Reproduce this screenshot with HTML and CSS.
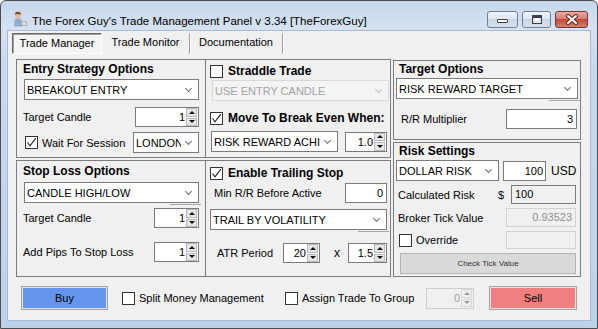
FILE: index.html
```html
<!DOCTYPE html>
<html lang="en">
<head>
    <meta charset="UTF-8">
    <title>The Forex Guy's Trade Management Panel</title>
    <link rel="stylesheet" href="styles.css">
</head>
<body>
<div class="window">
    <div class="titlebar">
        <svg class="appicon" width="14" height="16" viewBox="0 0 14 16">
            <path d="M1 15.5 L1.4 9.5 Q1.8 7.2 5 7.2 Q8.2 7.2 8.6 9.5 L9 15.5 Z" fill="#93aecd"/>
            <circle cx="5" cy="4.2" r="3" fill="#eabb92"/>
            <path d="M1.9 4 Q1.8 0.6 5.2 0.8 Q8.3 1 8 4 L7.2 2.9 Q5 3.4 2.8 2.9 Z" fill="#7b4a28"/>
            <rect x="8.5" y="10.5" width="5" height="4" fill="#dedede" stroke="#9a9a9a" stroke-width="0.7"/>
        </svg>
        <span class="title">The Forex Guy's Trade Management Panel v 3.34 [TheForexGuy]</span>
        <div class="controls">
            <span class="wbtn min"><i></i></span>
            <span class="wbtn max"><i></i></span>
            <span class="wbtn close">
                <svg width="14" height="11" viewBox="0 0 14 11">
                    <path d="M3 2 L11 9 M11 2 L3 9" stroke="#5a2a25" stroke-width="4" stroke-linecap="round"/>
                    <path d="M3 2 L11 9 M11 2 L3 9" stroke="#fff" stroke-width="2" stroke-linecap="round"/>
                </svg>
            </span>
        </div>
    </div>

    <div class="client">
        <div class="tabs">
            <span class="tab active">Trade Manager</span>
            <span class="tab monitor">Trade Monitor</span>
            <span class="tab docs">Documentation</span>
        </div>

        <div class="page">
            <div class="groups">
                <div class="leftgroups">
                    <section class="panel entry">
                        <h3 class="hd">Entry Strategy Options</h3>
                        <div class="combo mt3"><span>BREAKOUT ENTRY</span><i class="chev"></i></div>
                        <div class="row mt7">
                            <span class="lbl">Target Candle</span>
                            <div class="spin w64"><span>1</span><div class="arr"><b class="up"></b><b class="dn"></b></div></div>
                        </div>
                        <div class="row mt5">
                            <label class="check">
                                <span class="cb"><svg width="11" height="11" viewBox="0 0 11 11"><path d="M1.5 5.5 L4 8.8 L9.8 1.2" fill="none" stroke="#222" stroke-width="1.1"/></svg></span>
                                Wait For Session
                            </label>
                            <div class="combo w66"><span>LONDON</span><i class="chev"></i></div>
                        </div>
                    </section>

                    <section class="panel straddle">
                        <label class="check bold">
                            <span class="cb"></span>
                            Straddle Trade
                        </label>
                        <div class="combo disabled mt2 ml2"><span>USE ENTRY CANDLE</span><i class="chev"></i></div>
                        <label class="check bold mt10">
                            <span class="cb"><svg width="11" height="11" viewBox="0 0 11 11"><path d="M1.5 5.5 L4 8.8 L9.8 1.2" fill="none" stroke="#222" stroke-width="1.1"/></svg></span>
                            Move To Break Even When:
                        </label>
                        <div class="row mt6 mr2">
                            <div class="combo w127 ml1"><span>RISK REWARD ACHIEVED</span><i class="chev"></i></div>
                            <div class="spin w42"><span>1.0</span><div class="arr"><b class="up"></b><b class="dn"></b></div></div>
                        </div>
                    </section>

                    <section class="panel stoploss">
                        <h3 class="hd">Stop Loss Options</h3>
                        <div class="combo ghost mt4"><span>CANDLE HIGH/LOW</span><i class="chev"></i></div>
                        <div class="row mt5">
                            <span class="lbl">Target Candle</span>
                            <div class="spin w45"><span>1</span><div class="arr"><b class="up"></b><b class="dn"></b></div></div>
                        </div>
                        <div class="row mt14">
                            <span class="lbl">Add Pips To Stop Loss</span>
                            <div class="spin w45"><span>1</span><div class="arr"><b class="up"></b><b class="dn"></b></div></div>
                        </div>
                    </section>

                    <section class="panel trailing">
                        <label class="check bold">
                            <span class="cb"><svg width="11" height="11" viewBox="0 0 11 11"><path d="M1.5 5.5 L4 8.8 L9.8 1.2" fill="none" stroke="#222" stroke-width="1.1"/></svg></span>
                            Enable Trailing Stop
                        </label>
                        <div class="row mt3 mr2">
                            <span class="lbl ml4">Min R/R Before Active</span>
                            <div class="field w42">0</div>
                        </div>
                        <div class="combo ghost mt6 mr2"><span>TRAIL BY VOLATILITY</span><i class="chev"></i></div>
                        <div class="row mt13 mr2">
                            <span class="lbl ml7 grow">ATR Period</span>
                            <div class="spin w37"><span>20</span><div class="arr"><b class="up"></b><b class="dn"></b></div></div>
                            <span class="times">x</span>
                            <div class="spin w39"><span>1.5</span><div class="arr"><b class="up"></b><b class="dn"></b></div></div>
                        </div>
                    </section>
                </div>

                <div class="rightgroups">
                    <section class="panel target">
                        <h3 class="hd ml3">Target Options</h3>
                        <div class="combo ghost mt2"><span>RISK REWARD TARGET</span><i class="chev"></i></div>
                        <div class="row mt10 mr1">
                            <span class="lbl ml5">R/R Multiplier</span>
                            <div class="field w71">3</div>
                        </div>
                    </section>

                    <section class="panel risk">
                        <h3 class="hd ml3">Risk Settings</h3>
                        <div class="row start mt2">
                            <div class="combo w103"><span>DOLLAR RISK</span><i class="chev"></i></div>
                            <div class="field amount">100</div>
                            <span class="usd">USD</span>
                        </div>
                        <div class="row mt4 mr2">
                            <span class="lbl ml2 grow">Calculated Risk</span>
                            <span class="dollar">$</span>
                            <div class="field readonly w65">100</div>
                        </div>
                        <div class="row mt4 mr2">
                            <span class="lbl ml2">Broker Tick Value</span>
                            <div class="field off w70">0.93523</div>
                        </div>
                        <div class="row mt4 mr2">
                            <label class="check ml3">
                                <span class="cb"></span>
                                Override
                            </label>
                            <div class="field off w70 h18"></div>
                        </div>
                        <button type="button" class="tickbtn">Check Tick Value</button>
                    </section>
                </div>
            </div>

            <div class="actions">
                <button type="button" class="trade buy">Buy</button>
                <label class="check split">
                    <span class="cb"></span>
                    Split Money Management
                </label>
                <label class="check assign">
                    <span class="cb"></span>
                    Assign Trade To Group
                </label>
                <div class="spin disabled w48"><span>0</span><div class="arr"><b class="up"></b><b class="dn"></b></div></div>
                <button type="button" class="trade sell">Sell</button>
            </div>
        </div>
    </div>
</div>
</body>
</html>
```

FILE: styles.css
```css
*{
    margin: 0;
    padding: 0;
    box-sizing: border-box;
}
body{
    background: #fff;
    font-family: "Liberation Sans", Arial, sans-serif;
    font-size: 11px;
    color: #000;
}

/* window frame */
.window{
    width: 598px;
    height: 329px;
    border: 1px solid #4d4d4d;
    border-radius: 6px 6px 0 0;
    background: linear-gradient(#c6d7ec, #d6e2f1 28px, #c9daee 60px, #bcd1ea);
    padding: 0 7px 8px 7px;
    display: flex;
    flex-direction: column;
}
.titlebar{
    height: 30px;
    display: flex;
    align-items: center;
    padding: 6px 2px 0 5px;
}
.appicon{
    flex: none;
}
.title{
    margin-left: 5px;
    padding-top: 3px;
    font-size: 11.5px;
    color: #000;
    white-space: nowrap;
}
.controls{
    margin-left: auto;
    display: flex;
    gap: 4px;
}
.wbtn{
    height: 17px;
    border: 1px solid #6c7d96;
    border-radius: 3px;
    display: flex;
    align-items: center;
    justify-content: center;
    background: linear-gradient(#eef3f9, #dbe5f1 50%, #c7d5e7 50%, #d6e2f0);
}
.wbtn.min{
    width: 31px;
    align-items: flex-end;
    padding-bottom: 4px;
}
.wbtn.min i{
    width: 11px;
    height: 4px;
    border: 1px solid #3b3f46;
    border-radius: 1px;
    background: #fff;
}
.wbtn.max{
    width: 29px;
}
.wbtn.max i{
    width: 10px;
    height: 9px;
    border: 1px solid #3b3f46;
    background: #fff;
    box-shadow: inset 0 2px 0 #3b3f46, inset 0 0 0 2px #d9e2ee;
}
.wbtn.close{
    width: 33px;
    border-color: #6e3a33;
    background: linear-gradient(#e6aaa1, #d57a6d 50%, #c4483a 50%, #d3806f);
}

/* client area */
.client{
    flex: 1;
    background: #f0f0f0;
    box-shadow: 0 0 0 1px #a9bbd3;
}
.tabs{
    display: flex;
    height: 21px;
    margin: 2px 0 0 4px;
}
.tab{
    height: 21px;
    line-height: 19px;
    text-align: center;
    border-right: 1px solid #a0a0a0;
    box-shadow: 1px 0 0 #fff;
}
.tab.active{
    width: 90px;
    border: 1px solid;
    border-color: #696969 #fff #fff #696969;
    box-shadow: inset 1px 1px 0 #a0a0a0;
    background: #f4f4f4;
}
.tab.monitor{
    width: 88px;
}
.tab.docs{
    width: 93px;
}
.page{
    padding: 5px 0 0 8px;
}
.groups{
    display: flex;
}
.leftgroups{
    display: grid;
    grid-template-columns: 190px 185px;
    grid-template-rows: 99px 117px;
    row-gap: 2px;
}
.rightgroups{
    width: 188px;
    margin: 1px 0 0 2px;
    display: flex;
    flex-direction: column;
    gap: 2px;
}
.panel{
    border: 1px solid #7c7c7c;
    display: flex;
    flex-direction: column;
}
.entry{
    padding: 3px 6px 0 7px;
}
.straddle{
    border-left: none;
    padding: 4px 1px 0 4px;
}
.stoploss{
    padding: 4px 6px 0 7px;
}
.trailing{
    border-left: none;
    padding: 5px 1px 0 4px;
}
.target{
    height: 80px;
    padding: 2px 2px 0 2px;
}
.risk{
    height: 135px;
    padding: 2px 2px 0 2px;
}
.hd{
    font-size: 12px;
    font-weight: bold;
    line-height: 13px;
    margin-left: -1px;
    white-space: nowrap;
}

/* rows and helpers */
.row{
    display: flex;
    align-items: center;
    justify-content: space-between;
}
.row.start{
    justify-content: flex-start;
}
.lbl{
    white-space: nowrap;
    margin-left: -1px;
}
.grow{
    flex: 1;
}
.mt2{ margin-top: 2px; }
.mt3{ margin-top: 3px; }
.mt4{ margin-top: 4px; }
.mt5{ margin-top: 5px; }
.mt6{ margin-top: 6px; }
.mt7{ margin-top: 7px; }
.mt10{ margin-top: 10px; }
.mt13{ margin-top: 13px; }
.mt14{ margin-top: 14px; }
.ml1{ margin-left: 1px; }
.ml2{ margin-left: 2px; }
.ml3{ margin-left: 3px; }
.ml4{ margin-left: 4px; }
.ml5{ margin-left: 5px; }
.ml7{ margin-left: 7px; }
.mr1{ margin-right: 1px; }
.mr2{ margin-right: 2px; }
.times{
    margin: 0 8px 0 14px;
    font-size: 12px;
}

/* combo box */
.combo{
    height: 21px;
    border: 1px solid #7a7a7a;
    background: #fff;
    display: flex;
    align-items: center;
    padding-left: 2px;
}
.combo span{
    flex: 1;
    overflow: hidden;
    white-space: nowrap;
}
.chev{
    flex: none;
    width: 5px;
    height: 5px;
    margin: -3px 7px 0 5px;
    border-right: 1px solid #6a6a6a;
    border-bottom: 1px solid #6a6a6a;
    transform: rotate(45deg);
}
.combo.disabled{
    background: #f4f4f4;
    border-color: #d9d9d9;
    color: #a3a3a3;
}
.combo.disabled .chev{
    border-color: #bcbcbc;
}
.combo.ghost{
    position: relative;
}
.combo.ghost::after{
    content: "";
    position: absolute;
    right: -3px;
    bottom: -3px;
    width: 31px;
    height: 1px;
    background: #a8a8a8;
}
.w66{ width: 66px; }
.w103{ width: 103px; }
.w127{ width: 127px; }

/* numeric up-down */
.spin{
    height: 20px;
    border: 1px solid #7a7a7a;
    background: #fff;
    display: flex;
    align-items: center;
}
.spin span{
    flex: 1;
    text-align: right;
    padding-right: 1px;
}
.arr{
    width: 12px;
    height: 18px;
    display: flex;
    flex-direction: column;
    gap: 1px;
    padding: 0 1px 0 0;
}
.arr b{
    flex: 1;
    background: #e6e6e6;
    border: 1px solid #b9b9b9;
    display: flex;
    align-items: center;
    justify-content: center;
}
.arr b::after{
    content: "";
    border-left: 3px solid transparent;
    border-right: 3px solid transparent;
}
.arr .up::after{
    border-bottom: 3px solid #111;
}
.arr .dn::after{
    border-top: 3px solid #111;
}
.spin.disabled{
    border-color: #cfcfcf;
    background: #f0f0f0;
    color: #a0a0a0;
    height: 21px;
}
.spin.disabled .arr b{
    background: #f0f0f0;
    border-color: #d6d6d6;
}
.spin.disabled .up::after{
    border-bottom-color: #9a9a9a;
}
.spin.disabled .dn::after{
    border-top-color: #9a9a9a;
}
.w37{ width: 37px; }
.w39{ width: 39px; }
.w42{ width: 42px; }
.w45{ width: 45px; }
.w48{ width: 48px; }
.w64{ width: 64px; }

/* text fields */
.field{
    height: 20px;
    border: 1px solid #7a7a7a;
    background: #fff;
    text-align: right;
    padding-right: 3px;
    line-height: 18px;
}
.field.amount{
    width: 43px;
    margin: 1px 0 0 4px;
    padding-right: 2px;
}
.field.readonly{
    background: #f0f0f0;
    text-align: left;
    padding-left: 3px;
    height: 19px;
    line-height: 17px;
}
.field.off{
    background: #f0f0f0;
    border-color: #d2d2d2;
    color: #8f8f8f;
    height: 19px;
    line-height: 17px;
}
.field.h18{
    height: 18px;
}
.w65{ width: 65px; }
.w70{ width: 70px; }
.w71{ width: 71px; }
.usd{
    margin: 1px 0 0 5px;
    font-size: 12px;
}
.dollar{
    margin-right: 7px;
}

/* checkbox */
.check{
    display: flex;
    align-items: center;
    gap: 4px;
    white-space: nowrap;
}
.check.bold{
    font-size: 12px;
    font-weight: bold;
    gap: 5px;
}
.cb{
    flex: none;
    width: 13px;
    height: 13px;
    border: 1px solid #333;
    background: #fff;
    display: flex;
    align-items: center;
    justify-content: center;
}
.entry .check{
    margin-left: 1px;
}

/* buttons */
.tickbtn{
    margin: 4px 0 0 4px;
    width: 176px;
    height: 21px;
    border: 1px solid #b4b4b4;
    background: #dadada;
    font-family: "Liberation Sans", Arial, sans-serif;
    font-size: 8px;
    color: #333;
}
.actions{
    display: flex;
    align-items: center;
    margin-top: 9px;
    padding-left: 5px;
}
.trade{
    height: 24px;
    border: 1px solid #a3a3a3;
    box-shadow: inset 0 0 0 1px #e3e3e3;
    font-family: "Liberation Sans", Arial, sans-serif;
    font-size: 11px;
    color: #000;
}
.buy{
    width: 87px;
    background: #6495ed;
}
.sell{
    width: 88px;
    margin-left: 15px;
    background: #f08080;
}
.split{
    width: 163px;
    margin-left: 14px;
}
.assign{
    width: 141px;
}
```
